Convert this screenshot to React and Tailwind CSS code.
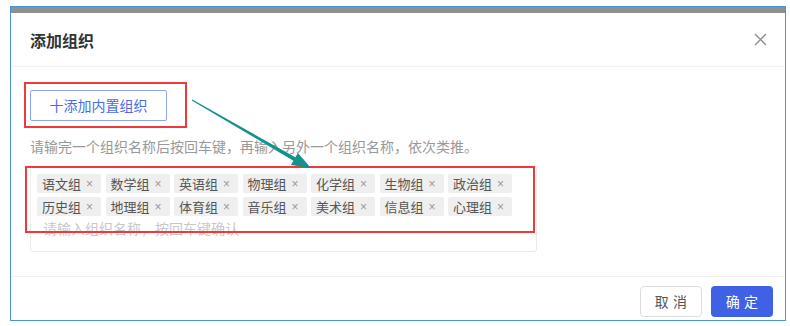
const tags = [
  '语文组', '数学组', '英语组', '物理组', '化学组', '生物组', '政治组',
  '历史组', '地理组', '体育组', '音乐组', '美术组', '信息组', '心理组',
];

const cjk = { fontFamily: '"Noto Sans CJK SC", "Noto Sans", sans-serif' };

export default function App() {
  return (
    <div className="relative w-[790px] h-[326px] bg-white overflow-hidden" style={cjk}>
      <div className="ml-[10px] mt-[6px] w-[776px] h-[315px] border border-[#4a94dc] flex flex-col bg-white">
        <div className="h-[6px] bg-[#8f8f8f]" />

        <div className="h-[54px] pl-[19px] pr-[18px] flex items-center justify-between border-b border-[#f0f0f0]">
          <span className="text-[16px] font-bold text-[#333]">添加组织</span>
          <svg width="13" height="13" viewBox="0 0 13 13" className="text-[#8c8c8c]">
            <path d="M1 1L12 12M12 1L1 12" stroke="currentColor" strokeWidth="1.3" fill="none" />
          </svg>
        </div>

        <div className="flex-1 pl-[19px] pt-[23px]">
          <button className="h-[31px] w-[137px] border border-[#8ea4f4] rounded-[2px] text-[14px] text-[#4a6ae6] flex items-center justify-center">
            十添加内置组织
          </button>

          <p className="mt-[15px] text-[14px] leading-[20px] text-[#999]">
            请输完一个组织名称后按回车键，再输入另外一个组织名称，依次类推。
          </p>

          <div className="mt-[10px] w-[507px] h-[86px] border border-[#ebebeb] rounded-[3px] pl-[6px] pt-[7px]">
            <div className="flex flex-wrap gap-x-[4.5px] gap-y-[4px] w-[480px]">
              {tags.map((t) => (
                <span
                  key={t}
                  className="h-[19px] w-[64px] pl-[5px] bg-[#efefef] rounded-[2px] flex items-center text-[13px] text-[#555]"
                >
                  {t}
                  <span className="ml-[5px] text-[12px] text-[#999]" style={{ fontFamily: '"Liberation Sans", sans-serif' }}>
                    ×
                  </span>
                </span>
              ))}
            </div>
            <div className="mt-[2px] pl-[6px] text-[14px] leading-[20px] text-[#c8c8c8]">
              请输入组织名称，按回车键确认
            </div>
          </div>
        </div>

        <div className="h-[44px] border-t border-[#f0f0f0] flex items-start justify-end gap-[9px] pr-[12px] pt-[9px]">
          <button className="h-[31px] w-[62px] border border-[#dcdcdc] rounded-[4px] text-[14px] text-[#555] tracking-[0.3em] pl-[4px]">
            取消
          </button>
          <button className="h-[31px] w-[62px] rounded-[4px] bg-[#3f61e6] text-[14px] text-white tracking-[0.3em] pl-[4px]">
            确定
          </button>
        </div>
      </div>

      {/* annotation boxes */}
      <div className="absolute left-[24px] top-[82px] w-[163px] h-[46px] border-2 border-[#f03a3a] pointer-events-none" />
      <div className="absolute left-[25px] top-[166px] w-[510px] h-[67px] border-2 border-[#f03a3a] pointer-events-none" />

      <svg className="absolute left-0 top-0 pointer-events-none" width="790" height="326" viewBox="0 0 790 326">
        <polygon
          points="192.3,99.6 295.4,157.3 297.9,152.9 311,168 290.9,165.1 293.4,160.7 191.7,100.4"
          fill="#14928f"
        />
      </svg>
    </div>
  );
}
